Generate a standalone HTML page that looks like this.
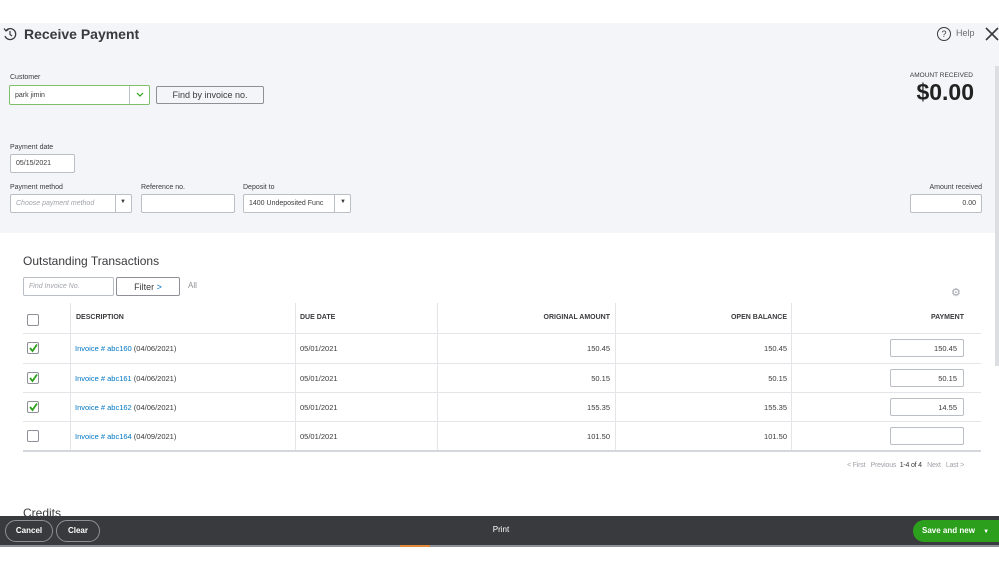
<!DOCTYPE html>
<html><head><style>
*{box-sizing:border-box;margin:0;padding:0}
body{width:999px;height:562px;overflow:hidden;background:#fff;font-family:"Liberation Sans",sans-serif;color:#393a3d;position:relative}
.a{position:absolute}
.panel{left:0;top:23px;width:999px;height:210px;background:#f4f5f8}
.lbl{font-size:7px;color:#393a3d}
.inp{background:#fff;border:1px solid #babec5;border-radius:2px;font-size:7px;padding-left:5px;display:flex;align-items:center}
.th{font-size:7px;font-weight:bold;color:#393a3d}
.td{font-size:7.5px;color:#393a3d}
.lk{color:#0077c5}
.cb{width:12px;height:12px;border:1px solid #8d9096;border-radius:2px;background:#fff}
.hl{height:1px;background:#e3e5e8;left:23px;width:958px}
.vl{width:1px;background:#e3e5e8;top:303px;height:148px}
.pay{width:74px;height:18px;border:1px solid #babec5;border-radius:2px;font-size:7.5px;text-align:right;padding:4px 6px 0 0}
.btn{border:1px solid #8d9096;border-radius:16px;color:#fff;font-size:8px;font-weight:bold;text-align:center}
</style></head><body>
<div class="a panel"></div>
<svg class="a" style="left:3px;top:27px" width="14" height="14" viewBox="0 0 14 14"><path d="M3 3.5A5.5 5.5 0 1 1 2 9" fill="none" stroke="#393a3d" stroke-width="1.3"/><path d="M1 1.5L3 4L5.5 2.5" fill="none" stroke="#393a3d" stroke-width="1.2"/><path d="M7 4v3.5l2 1.5" fill="none" stroke="#393a3d" stroke-width="1.2"/></svg>
<div class="a" style="left:24px;top:26px;font-size:14px;font-weight:bold;color:#393a3d">Receive Payment</div>
<div class="a" style="left:937px;top:27px;width:14px;height:14px;border:1.3px solid #393a3d;border-radius:50%;font-size:9px;text-align:center;line-height:12px">?</div>
<div class="a" style="left:956px;top:28px;font-size:9px;color:#6b6c72">Help</div>
<svg class="a" style="left:985px;top:27px" width="14" height="14"><path d="M1 1L13 13M13 1L1 13" stroke="#393a3d" stroke-width="1.6"/></svg>
<div class="a" style="left:995px;top:66px;width:4px;height:300px;background:#dcdee2"></div>

<div class="a lbl" style="left:10px;top:74px">Customer</div>
<div class="a inp" style="left:9px;top:85px;width:141px;height:20px;border:1px solid #7fbf6c">park jimin</div>
<div class="a" style="left:129px;top:86px;width:1px;height:18px;background:#babec5"></div>
<svg class="a" style="left:136px;top:92px" width="8" height="6"><path d="M1 1L4 4L7 1" stroke="#2ca01c" fill="none" stroke-width="1.2"/></svg>
<div class="a" style="left:156px;top:86px;width:108px;height:18px;border:1px solid #8d9096;border-radius:2px;background:#f4f5f8;font-size:9px;text-align:center;line-height:17px">Find by invoice no.</div>

<div class="a" style="left:880px;top:72px;width:93px;text-align:right;font-size:6.5px">AMOUNT RECEIVED</div>
<div class="a" style="left:860px;top:79px;width:114px;text-align:right;font-size:23px;font-weight:bold;color:#222">$0.00</div>

<div class="a lbl" style="left:10px;top:144px">Payment date</div>
<div class="a inp" style="left:10px;top:154px;width:65px;height:19px">05/15/2021</div>
<div class="a lbl" style="left:10px;top:184px">Payment method</div>
<div class="a inp" style="left:10px;top:194px;width:122px;height:19px;color:#a0a3a8;font-style:italic">Choose payment method</div>
<div class="a" style="left:115px;top:195px;width:1px;height:17px;background:#babec5"></div>
<div class="a" style="left:120px;top:199px;font-size:6px">▼</div>
<div class="a lbl" style="left:141px;top:184px">Reference no.</div>
<div class="a inp" style="left:141px;top:194px;width:94px;height:19px"></div>
<div class="a lbl" style="left:243px;top:184px">Deposit to</div>
<div class="a inp" style="left:243px;top:194px;width:108px;height:19px">1400 Undeposited Func</div>
<div class="a" style="left:334px;top:195px;width:1px;height:17px;background:#babec5"></div>
<div class="a" style="left:340px;top:199px;font-size:6px">▼</div>
<div class="a lbl" style="left:900px;top:184px;width:82px;text-align:right">Amount received</div>
<div class="a inp" style="left:910px;top:194px;width:72px;height:19px;justify-content:flex-end;padding-right:5px">0.00</div>

<div class="a" style="left:23px;top:254px;font-size:12px">Outstanding Transactions</div>
<div class="a inp" style="left:23px;top:277px;width:91px;height:19px;color:#a0a3a8;font-style:italic">Find Invoice No.</div>
<div class="a" style="left:116px;top:277px;width:64px;height:19px;border:1px solid #8d9096;border-radius:2px;font-size:9px;text-align:center;line-height:18px">Filter <span style="color:#0077c5">&gt;</span></div>
<div class="a" style="left:188px;top:281px;font-size:8px;color:#8d9096">All</div>
<div class="a" style="left:951px;top:286px;font-size:11px;color:#a0a3a8">⚙</div>

<div class="a vl" style="left:70px"></div><div class="a vl" style="left:295px"></div><div class="a vl" style="left:437px"></div><div class="a vl" style="left:615px"></div><div class="a vl" style="left:791px"></div>
<div class="a cb" style="left:27px;top:314px"></div>
<div class="a th" style="left:76px;top:314px">DESCRIPTION</div>
<div class="a th" style="left:300px;top:314px">DUE DATE</div>
<div class="a th" style="left:440px;top:314px;width:170px;text-align:right">ORIGINAL AMOUNT</div>
<div class="a th" style="left:620px;top:314px;width:167px;text-align:right">OPEN BALANCE</div>
<div class="a th" style="left:800px;top:314px;width:164px;text-align:right">PAYMENT</div>
<div class="a hl" style="top:333px"></div>
<div class="a hl" style="top:363px"></div>
<div class="a hl" style="top:392px"></div>
<div class="a hl" style="top:421px"></div>
<div class="a hl" style="top:450px;height:2px;background:#d4d7dc"></div>

<div class="a cb" style="left:27px;top:342px"></div><svg class="a" style="left:28px;top:343px" width="11" height="10"><path d="M2 5L4.5 8L9 1.5" stroke="#2ca01c" stroke-width="1.8" fill="none"/></svg>
<div class="a td" style="left:75px;top:344px"><span class="lk">Invoice # abc160</span> (04/06/2021)</div>
<div class="a td" style="left:300px;top:344px">05/01/2021</div>
<div class="a td" style="left:450px;top:344px;width:160px;text-align:right">150.45</div>
<div class="a td" style="left:620px;top:344px;width:167px;text-align:right">150.45</div>
<div class="a pay" style="left:890px;top:339px">150.45</div>

<div class="a cb" style="left:27px;top:372px"></div><svg class="a" style="left:28px;top:373px" width="11" height="10"><path d="M2 5L4.5 8L9 1.5" stroke="#2ca01c" stroke-width="1.8" fill="none"/></svg>
<div class="a td" style="left:75px;top:374px"><span class="lk">Invoice # abc161</span> (04/06/2021)</div>
<div class="a td" style="left:300px;top:374px">05/01/2021</div>
<div class="a td" style="left:450px;top:374px;width:160px;text-align:right">50.15</div>
<div class="a td" style="left:620px;top:374px;width:167px;text-align:right">50.15</div>
<div class="a pay" style="left:890px;top:369px">50.15</div>

<div class="a cb" style="left:27px;top:401px"></div><svg class="a" style="left:28px;top:402px" width="11" height="10"><path d="M2 5L4.5 8L9 1.5" stroke="#2ca01c" stroke-width="1.8" fill="none"/></svg>
<div class="a td" style="left:75px;top:403px"><span class="lk">Invoice # abc162</span> (04/06/2021)</div>
<div class="a td" style="left:300px;top:403px">05/01/2021</div>
<div class="a td" style="left:450px;top:403px;width:160px;text-align:right">155.35</div>
<div class="a td" style="left:620px;top:403px;width:167px;text-align:right">155.35</div>
<div class="a pay" style="left:890px;top:398px">14.55</div>

<div class="a cb" style="left:27px;top:430px"></div>
<div class="a td" style="left:75px;top:432px"><span class="lk">Invoice # abc164</span> (04/09/2021)</div>
<div class="a td" style="left:300px;top:432px">05/01/2021</div>
<div class="a td" style="left:450px;top:432px;width:160px;text-align:right">101.50</div>
<div class="a td" style="left:620px;top:432px;width:167px;text-align:right">101.50</div>
<div class="a pay" style="left:890px;top:427px"></div>

<div class="a" style="left:800px;top:462px;width:164px;text-align:right;font-size:7px;color:#a0a3a8;letter-spacing:-0.2px">&lt; First &nbsp; Previous &nbsp;<span style="color:#393a3d">1-4 of 4</span> &nbsp; Next &nbsp; Last &gt;</div>

<div class="a" style="left:23px;top:506px;font-size:12px">Credits</div>
<div class="a" style="left:0;top:516px;width:999px;height:30px;background:#393a3d"></div>
<div class="a" style="left:0;top:545px;width:999px;height:2px;background:#8d9096"></div>
<div class="a" style="left:400px;top:545px;width:30px;height:2px;background:#e08a3c"></div>
<div class="a btn" style="left:5px;top:520px;width:48px;height:22px;line-height:20px">Cancel</div>
<div class="a btn" style="left:56px;top:520px;width:44px;height:22px;line-height:20px">Clear</div>
<div class="a" style="left:480px;top:525px;width:42px;text-align:center;font-size:8px;color:#fff">Print</div>
<div class="a" style="left:913px;top:520px;width:86px;height:22px;background:#2ca01c;border-radius:11px 0 0 11px;color:#fff;font-size:8px;font-weight:bold;line-height:22px;padding-left:9px">Save and new <span style="font-size:6px;margin-left:6px">▼</span></div>
</body></html>
